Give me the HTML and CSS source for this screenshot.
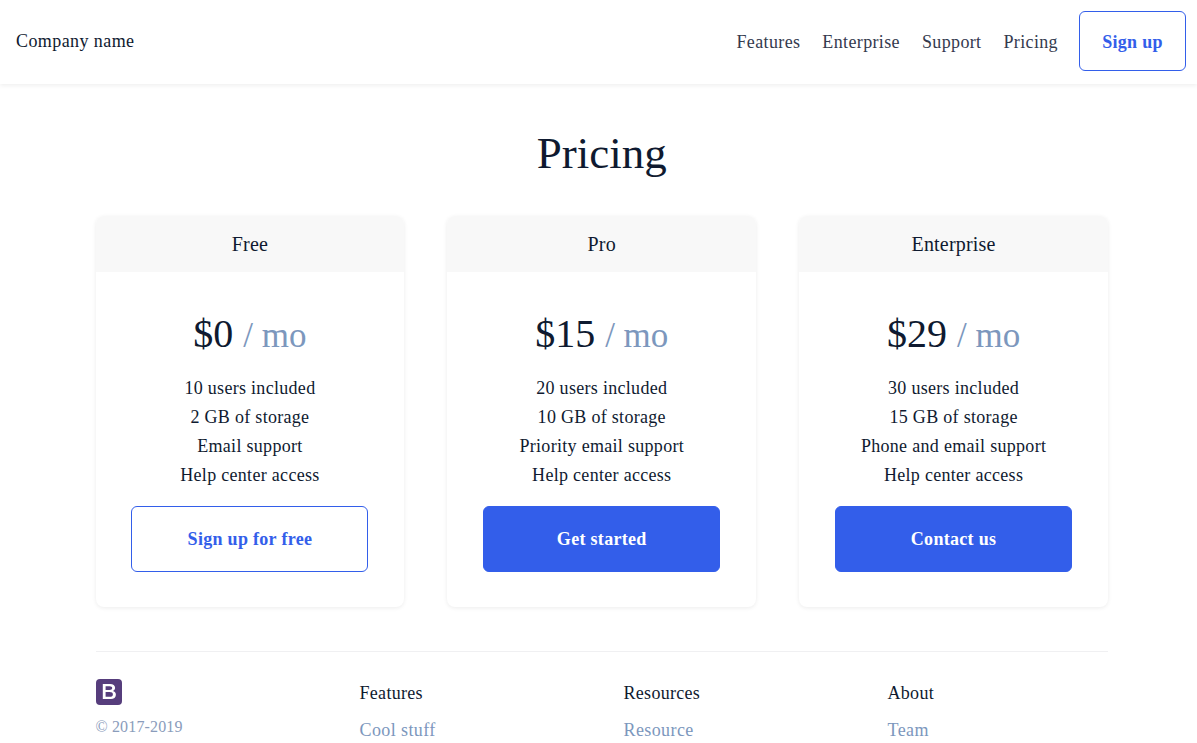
FILE: index.html
```html
<!DOCTYPE html>
<html lang="en">
<head>
<meta charset="utf-8">
<title>Pricing</title>
<link rel="stylesheet" href="styles.css">
</head>
<body>
<header class="topbar">
  <div class="brand">Company name</div>
  <nav class="nav">
    <a href="#">Features</a>
    <a href="#">Enterprise</a>
    <a href="#">Support</a>
    <a href="#">Pricing</a>
  </nav>
  <a class="btn btn-outline btn-nav" href="#">Sign up</a>
</header>
<main class="container">
  <h1 class="title">Pricing</h1>
  <section class="cards">
    <article class="card">
      <h2 class="card-head">Free</h2>
      <div class="card-body">
        <div class="price">$0 <small>/ mo</small></div>
        <ul class="features">
          <li>10 users included</li>
          <li>2 GB of storage</li>
          <li>Email support</li>
          <li>Help center access</li>
        </ul>
        <a class="btn btn-outline btn-card" href="#">Sign up for free</a>
      </div>
    </article>
    <article class="card">
      <h2 class="card-head">Pro</h2>
      <div class="card-body">
        <div class="price">$15 <small>/ mo</small></div>
        <ul class="features">
          <li>20 users included</li>
          <li>10 GB of storage</li>
          <li>Priority email support</li>
          <li>Help center access</li>
        </ul>
        <a class="btn btn-solid btn-card" href="#">Get started</a>
      </div>
    </article>
    <article class="card">
      <h2 class="card-head">Enterprise</h2>
      <div class="card-body">
        <div class="price">$29 <small>/ mo</small></div>
        <ul class="features">
          <li>30 users included</li>
          <li>15 GB of storage</li>
          <li>Phone and email support</li>
          <li>Help center access</li>
        </ul>
        <a class="btn btn-solid btn-card" href="#">Contact us</a>
      </div>
    </article>
  </section>
  <footer class="footer">
    <div class="foot-col">
      <svg class="logo" viewBox="0 0 26 26" width="26" height="26" aria-hidden="true">
        <rect width="26" height="26" rx="4" fill="#563d7c"/>
        <path d="M6.8 5h7.4c3 0 4.9 1.4 4.9 3.8 0 1.6-.9 2.8-2.3 3.2 1.9.3 3.1 1.7 3.1 3.7 0 2.7-2 4.3-5.1 4.3h-8zM9.6 7.2v3.8h3.9c1.7 0 2.7-.7 2.7-1.9 0-1.2-.9-1.9-2.6-1.9zM9.6 13.1v4.7h4.3c1.9 0 3-.8 3-2.4 0-1.5-1.1-2.3-3.2-2.3z" fill="#fff" fill-rule="evenodd"/>
      </svg>
      <small class="copy">© 2017-2019</small>
    </div>
    <div class="foot-col">
      <h3 class="foot-head">Features</h3>
      <a class="foot-link" href="#">Cool stuff</a>
    </div>
    <div class="foot-col">
      <h3 class="foot-head">Resources</h3>
      <a class="foot-link" href="#">Resource</a>
    </div>
    <div class="foot-col">
      <h3 class="foot-head">About</h3>
      <a class="foot-link" href="#">Team</a>
    </div>
  </footer>
</main>
</body>
</html>
```
FILE: styles.css
```css
* { box-sizing: border-box; }
html { overflow: hidden; height: 100%; }
body {
  margin: 0;
  height: 100%;
  overflow: hidden;
  background: #fff;
  color: #0f1a30;
  font-family: "Liberation Serif", "Times New Roman", serif;
  font-size: 18px;
  line-height: 1.6;
  letter-spacing: 0.3px;
}
a { text-decoration: none; }

.topbar {
  display: flex;
  align-items: flex-start;
  height: 84px;
  padding: 11px 11px 0 16px;
  background: #fff;
  box-shadow: 0 2px 4px rgba(0, 0, 0, 0.06);
}
.brand { flex: 1; padding-top: 16px; letter-spacing: 0.42px; }
.nav { display: flex; gap: 22px; margin-right: 21px; padding-top: 17px; letter-spacing: 0.36px; }
.nav a { color: #343a4e; }

.btn {
  display: block;
  border: 1px solid #335eea;
  border-radius: 6px;
  font-weight: 700;
  text-align: center;
}
.btn-outline { color: #335eea; background: #fff; }
.btn-solid { color: #fff; background: #335eea; }
.btn-nav { width: 107px; height: 60px; line-height: 60px; }
.btn-card { width: 237px; height: 66px; line-height: 64px; margin: 0 auto; }

.container { width: 1012.5px; margin: 0 0 0 95.5px; }
.title {
  margin: 0;
  padding-top: 40px;
  font-size: 45px;
  font-weight: 400;
  line-height: 58px;
  text-align: center;
  letter-spacing: 0;
}
.cards {
  display: grid;
  grid-template-columns: repeat(3, 1fr);
  column-gap: 43px;
  margin-top: 34px;
}
.card {
  border-radius: 8px;
  box-shadow: 0 1px 4px rgba(0, 0, 0, 0.08);
  overflow: hidden;
  height: 391px;
}
.card-head {
  margin: 0;
  height: 56px;
  background: #f8f8f8;
  font-size: 20px;
  font-weight: 400;
  line-height: 56px;
  text-align: center;
  letter-spacing: 0.2px;
}
.card-body { padding: 38px 0 0; text-align: center; }
.price { font-size: 40px; line-height: 48px; letter-spacing: 0; }
.price small { font-size: 35px; color: #7c97bd; }
.features {
  list-style: none;
  margin: 14px 0 0;
  padding: 0;
  line-height: 29px;
}
.features + .btn { margin-top: 16px; }

.footer {
  display: grid;
  grid-template-columns: repeat(4, 264px);
  margin-top: 44px;
  padding-top: 27px;
  border-top: 1px solid #f0f0f2;
}
.foot-col { display: flex; flex-direction: column; align-items: flex-start; }
.logo { display: block; }
.copy { margin-top: 8px; font-size: 16px; color: #8a9cbb; line-height: 28px; letter-spacing: 0.15px; }
.foot-head { margin: 0; font-size: 18px; font-weight: 400; line-height: 28px; letter-spacing: 0.3px; }
.foot-link { margin-top: 9px; color: #7c97bd; line-height: 29px; letter-spacing: 0.4px; }
```
